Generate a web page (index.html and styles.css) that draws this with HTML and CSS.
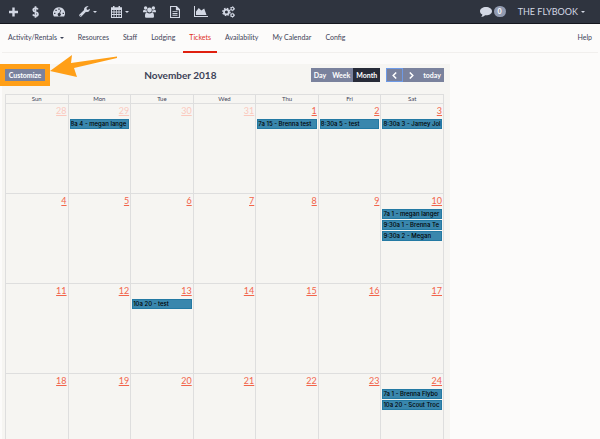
FILE: index.html
```
<!DOCTYPE html>
<html lang="en">

<head>
	<meta charset="utf-8">
	<title>Tickets</title>
	<link rel="stylesheet" href="styles.css">
</head>

<body>
	<header class="topbar">
		<button type="button" class="tool" aria-label="Add">
			<svg width="9" height="10" viewBox="0 0 9 10"><path d="M3.3 .5h2.4v3.3H9v2.4H5.7v3.3H3.3V6.2H0V3.8h3.3z" /></svg>
		</button>
		<button type="button" class="tool" aria-label="Sales">
			<svg width="7" height="12" viewBox="0 0 7 12"><path class="line" d="M6 3.4C5.4 2.5 4.6 2.1 3.5 2.1 2.1 2.1 1.2 2.8 1.2 3.9c0 2.6 4.8 1.4 4.8 4 0 1.2-1 2-2.5 2C2.3 9.9 1.4 9.4 .8 8.5M3.5 .3v11.4" /></svg>
		</button>
		<button type="button" class="tool" aria-label="Dashboard">
			<svg width="12" height="10" viewBox="0 0 12 10"><path fill-rule="evenodd" d="M6 .3a6 6 0 0 1 5.1 9.2H.9A6 6 0 0 1 6 .3zM5.3 1.5v1.3h1.4V1.5zM2.4 2.7v1.3h1.3V2.7zM1.1 5.7V7h1.3V5.7zM9.6 5.7V7h1.3V5.7zM8.3 3l-.7-.2-1.3 3.2a1.5 1.5 0 1 0 .7.2z" /></svg>
		</button>
		<button type="button" class="tool" aria-label="Settings">
			<svg width="11" height="11" viewBox="0 0 11 11"><path fill-rule="evenodd" d="M9.6 .5 7.6 1.7v1.5l1.2.7L10.8 2.7c.4 1.7-1 3.3-2.7 3.3-.4 0-.8-.1-1.1-.2L2.4 10.5c-.4.4-1 .4-1.4 0l-.5-.5c-.4-.4-.4-1 0-1.4L5.1 4C4.5 1.7 7.2-.6 9.6 .5zM1.3 8.9v.8h.8v-.8z" /></svg>
			<i class="caret"></i>
		</button>
		<button type="button" class="tool" aria-label="Calendar">
			<svg width="11" height="12" viewBox="0 0 11 12"><path fill-rule="evenodd" d="M2 0h1.5v1.3h4V0H9v1.3h2V12H0V1.3h2zM1 4v1.6h1.6V4zM3.4 4v1.6h1.7V4zM5.9 4v1.6h1.7V4zM8.4 4v1.6H10V4zM1 6.5V8h1.6V6.5zM3.4 6.5V8h1.7V6.5zM5.9 6.5V8h1.7V6.5zM8.4 6.5V8H10V6.5zM1 9v2h1.6V9zM3.4 9v2h1.7V9zM5.9 9v2h1.7V9zM8.4 9v2H10V9z" /></svg>
			<i class="caret"></i>
		</button>
		<button type="button" class="tool" aria-label="Customers">
			<svg width="13" height="12" viewBox="0 0 13 12"><circle cx="2.6" cy="2" r="1.7" /><circle cx="10.4" cy="2" r="1.7" /><circle cx="6.5" cy="4" r="2.4" /><path d="M0 6.2c0-1.4.4-2.4 1-2.4.8.5 1.7.5 2.5.2C3.5 5 3.8 5.6 4.3 6.2zM13 6.2c0-1.4-.4-2.4-1-2.4-.8.5-1.7.5-2.5.2 0 1-.3 1.6-.8 2.2zM2 10.2c0-2.2.6-3.6 1.9-3.6 1.5 1.3 3.7 1.3 5.2 0 1.3 0 1.9 1.4 1.9 3.6 0 1-.6 1.5-1.5 1.5h-6c-.9 0-1.5-.5-1.5-1.5z" /></svg>
		</button>
		<button type="button" class="tool" aria-label="Reports">
			<svg width="10" height="12" viewBox="0 0 10 12"><path fill-rule="evenodd" d="M0 0h6.8L10 3.2V12H0zM1.1 1.1v9.8h7.8V4.2H5.9V1.1zM2.5 5.2h5v.9h-5zM2.5 7h5v.9h-5zM2.5 8.8h5v.9h-5z" /></svg>
		</button>
		<button type="button" class="tool" aria-label="Statistics">
			<svg width="14" height="11" viewBox="0 0 14 11"><path d="M0 0h1v10h13v1H0zM2 9V5.5L4.8 2l2.5 2.5L10.2 2.5 12.5 9z" /></svg>
		</button>
		<button type="button" class="tool" aria-label="Administration">
			<svg width="13" height="12" viewBox="0 0 13 12"><circle class="teeth" cx="4.4" cy="6" r="3.6" /><circle class="ring" cx="4.4" cy="6" r="2.4" /><circle class="teeth small" cx="10.4" cy="2.7" r="2" /><circle class="ring small" cx="10.4" cy="2.7" r="1.4" /><circle class="teeth small" cx="10.4" cy="9.2" r="2" /><circle class="ring small" cx="10.4" cy="9.2" r="1.4" /></svg>
		</button>

		<div class="account">
			<button type="button" class="messages" aria-label="Messages">
				<svg width="12" height="10" viewBox="0 0 12 10"><path d="M6 0c3.3 0 6 1.8 6 4.2S9.3 8.3 6 8.3l-1-.1C4 9.2 2.7 9.7 1.2 9.8c.7-.7 1.1-1.4 1.2-2.3C.9 6.8 0 5.6 0 4.2 0 1.8 2.7 0 6 0z" /></svg>
				<span class="badge">0</span>
			</button>
			<button type="button" class="company">THE FLYBOOK <i class="caret"></i></button>
		</div>
	</header>

	<nav class="subnav">
		<a href="#">Activity/Rentals <i class="caret"></i></a>
		<a href="#">Resources</a>
		<a href="#">Staff</a>
		<a href="#">Lodging</a>
		<a href="#" class="active">Tickets</a>
		<a href="#">Availability</a>
		<a href="#">My Calendar</a>
		<a href="#">Config</a>
		<a href="#" class="help">Help</a>
	</nav>

	<main class="calendar">
		<div class="toolbar">
			<div class="highlight">
				<button type="button" class="customize">Customize</button>
				<svg class="arrow" width="68" height="24" viewBox="0 0 68 24"><path d="M0 16 22 0 21 8 67 1.5V3L24 13l3 9z" /></svg>
			</div>
			<h2>November 2018</h2>
			<div class="controls">
				<div class="group">
					<button type="button">Day</button>
					<button type="button">Week</button>
					<button type="button" class="selected">Month</button>
				</div>
				<div class="group">
					<button type="button" class="step focused" aria-label="Previous">
						<svg width="5" height="7" viewBox="0 0 5 7"><path d="M4.2 .5 1.2 3.5l3 3" /></svg>
					</button>
					<button type="button" class="step" aria-label="Next">
						<svg width="5" height="7" viewBox="0 0 5 7"><path d="M.8 .5l3 3-3 3" /></svg>
					</button>
					<button type="button">today</button>
				</div>
			</div>
		</div>

		<table class="month">
			<thead>
				<tr>
					<th>Sun</th>
					<th>Mon</th>
					<th>Tue</th>
					<th>Wed</th>
					<th>Thu</th>
					<th>Fri</th>
					<th>Sat</th>
				</tr>
			</thead>
			<tbody>
				<tr>
					<td class="other"><a href="#" class="day">28</a></td>
					<td class="other"><a href="#" class="day">29</a><a href="#" class="event">8a 4 - megan lange</a></td>
					<td class="other"><a href="#" class="day">30</a></td>
					<td class="other"><a href="#" class="day">31</a></td>
					<td><a href="#" class="day">1</a><a href="#" class="event">7a 15 - Brenna test</a></td>
					<td><a href="#" class="day">2</a><a href="#" class="event">8:30a 5 - test</a></td>
					<td><a href="#" class="day">3</a><a href="#" class="event">8:30a 3 - Jamey Jol</a></td>
				</tr>
				<tr>
					<td><a href="#" class="day">4</a></td>
					<td><a href="#" class="day">5</a></td>
					<td><a href="#" class="day">6</a></td>
					<td><a href="#" class="day">7</a></td>
					<td><a href="#" class="day">8</a></td>
					<td><a href="#" class="day">9</a></td>
					<td><a href="#" class="day">10</a><a href="#" class="event">7a 1 - megan langer</a><a href="#" class="event">9:30a 1 - Brenna Te</a><a href="#" class="event">9:30a 2 - Megan</a></td>
				</tr>
				<tr>
					<td><a href="#" class="day">11</a></td>
					<td><a href="#" class="day">12</a></td>
					<td><a href="#" class="day">13</a><a href="#" class="event">10a 20 - test</a></td>
					<td><a href="#" class="day">14</a></td>
					<td><a href="#" class="day">15</a></td>
					<td><a href="#" class="day">16</a></td>
					<td><a href="#" class="day">17</a></td>
				</tr>
				<tr>
					<td><a href="#" class="day">18</a></td>
					<td><a href="#" class="day">19</a></td>
					<td><a href="#" class="day">20</a></td>
					<td><a href="#" class="day">21</a></td>
					<td><a href="#" class="day">22</a></td>
					<td><a href="#" class="day">23</a></td>
					<td><a href="#" class="day">24</a><a href="#" class="event">7a 1 - Brenna Flybo</a><a href="#" class="event">10a 20 - Scout Troc</a></td>
				</tr>
			</tbody>
		</table>
	</main>
</body>

</html>
```
FILE: styles.css
```
* {
	box-sizing: border-box;
}

body {
	margin: 0;
	font-family: Lato, "Liberation Sans", sans-serif;
	font-size: 7px;
	color: #3c4257;
	background-color: #fcfbfa;
}

button {
	padding: 0;
	border: none;
	font: inherit;
	color: inherit;
	background: none;
	cursor: pointer;
}

a {
	color: inherit;
	text-decoration: none;
}

svg {
	display: block;
	fill: currentColor;
}

.caret {
	display: inline-block;
	border: 2px solid transparent;
	border-top-color: currentColor;
	border-bottom: none;
}

/* top bar */
.topbar {
	display: flex;
	align-items: center;
	gap: 14px;
	height: 24px;
	padding: 0 15px 0 9px;
	color: #d3d8e4;
	background-color: #2f343f;
	border-bottom: 1px solid #14161d;
}

.tool {
	display: flex;
	align-items: center;
	gap: 3px;
}

.line {
	fill: none;
	stroke: currentColor;
	stroke-width: 1.7;
}

.ring {
	fill: none;
	stroke: currentColor;
	stroke-width: 1.8;
}

.teeth {
	fill: none;
	stroke: currentColor;
	stroke-width: 1.4;
	stroke-dasharray: 1.5 1.33;
}

.ring.small {
	stroke-width: 1.1;
}

.teeth.small {
	stroke-width: 1;
	stroke-dasharray: 1 1.1;
}

.account {
	display: flex;
	align-items: center;
	gap: 12px;
	margin-left: auto;
}

.messages {
	display: flex;
	align-items: center;
	gap: 2px;
}

.badge {
	padding: 0 4px;
	border-radius: 6px;
	font-size: 7px;
	font-weight: bold;
	line-height: 11px;
	color: #fff;
	background-color: #929bb1;
}

.company {
	display: flex;
	align-items: center;
	gap: 3px;
	font-size: 9px;
}

/* page navigation */
.subnav {
	display: flex;
	gap: 14px;
	margin: 0 2px;
	padding: 0 6px;
	border-bottom: 1px solid #f1efed;
	line-height: 27px;
}

.subnav a {
	white-space: nowrap;
}

.subnav .caret {
	margin-left: 1px;
	vertical-align: middle;
}

.subnav .active {
	margin: 0 -6px -1px;
	padding: 0 6px;
	color: #e0301e;
	border-bottom: 2px solid #e0200f;
}

.subnav .help {
	margin-left: auto;
}

/* calendar */
.calendar {
	width: 75%;
	margin-top: 11px;
	padding: 0 6px 0 5px;
	background: linear-gradient(90deg, #fcfbfa 2px, #f6f5f2 2px);
}

.toolbar {
	display: flex;
	align-items: center;
	justify-content: space-between;
	height: 30px;
	padding-bottom: 8px;
}

.highlight {
	position: relative;
	margin-left: -5px;
	border: 5px solid #ff9f17;
}

.customize {
	display: block;
	width: 40px;
	font-weight: bold;
	line-height: 12px;
	color: #fff;
	background-color: #7a829d;
}

.arrow {
	position: absolute;
	left: 45px;
	top: -14px;
	fill: #ff9f17;
}

h2 {
	margin: 0;
	font-size: 10px;
	font-weight: bold;
}

.controls {
	display: flex;
	justify-content: flex-end;
	gap: 6px;
}

.group {
	display: flex;
	color: #fff;
	background-color: #7a829d;
}

.group button {
	padding: 0 3px;
	font-weight: bold;
	line-height: 14px;
}

.group .selected {
	background-color: #272b38;
}

.group .step {
	padding: 0 6px;
}

.group .focused {
	outline: 1px solid #6e9ae6;
	outline-offset: -1px;
}

.step svg {
	fill: none;
	stroke: currentColor;
	stroke-width: 1.5;
}

.month {
	width: 100%;
	table-layout: fixed;
	border-collapse: collapse;
}

.month th,
.month td {
	padding: 0;
	border: 1px solid #dedede;
}

.month th {
	height: 9px;
	font-size: 6px;
	font-weight: normal;
	line-height: 8px;
}

.month td {
	height: 90px;
	padding: 1px 1px 0;
	vertical-align: top;
}

.day {
	display: block;
	margin-bottom: 3px;
	font-size: 9px;
	line-height: 11px;
	text-align: right;
	text-decoration: underline;
	color: #f2644a;
}

.other .day {
	color: #fbc9be;
}

.event {
	display: block;
	height: 10px;
	margin-bottom: 1px;
	border: 1px solid #2379a3;
	overflow: hidden;
	font-family: Inter, "Liberation Sans", sans-serif;
	font-size: 6px;
	font-weight: 500;
	line-height: 8px;
	white-space: nowrap;
	color: #000;
	background-color: #3a87ad;
}
```
